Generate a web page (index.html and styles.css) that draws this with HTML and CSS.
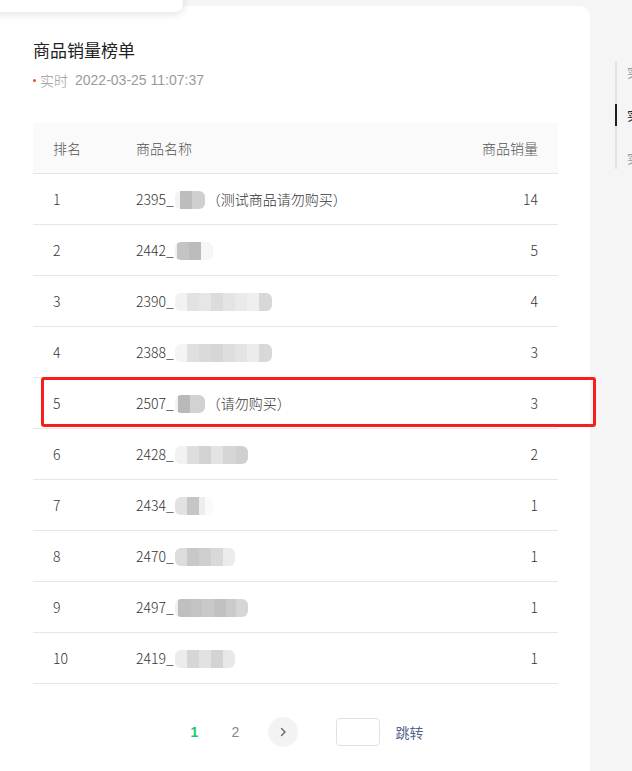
FILE: index.html
```html
<!DOCTYPE html>
<html lang="zh">
<head>
<meta charset="utf-8">
<title>商品销量榜单</title>
<link rel="stylesheet" href="styles.css">
</head>
<body>
<div class="popup"></div>
<div class="page">
  <section class="card">
    <h2 class="title">商品销量榜单</h2>
    <div class="meta"><span class="dot"></span><span class="live">实时</span><span class="time">2022-03-25 11:07:37</span></div>
    <div class="table-wrap">
      <table class="rank">
        <thead>
          <tr><th class="c-rank">排名</th><th class="c-name">商品名称</th><th class="c-sales">商品销量</th></tr>
        </thead>
        <tbody>
          <tr><td class="c-rank">1</td><td class="c-name">2395_<span class="mask m1"></span><span class="note">（测试商品请勿购买）</span></td><td class="c-sales">14</td></tr>
          <tr><td class="c-rank">2</td><td class="c-name">2442_<span class="mask m2"></span></td><td class="c-sales">5</td></tr>
          <tr><td class="c-rank">3</td><td class="c-name">2390_<span class="mask m3"></span></td><td class="c-sales">4</td></tr>
          <tr><td class="c-rank">4</td><td class="c-name">2388_<span class="mask m4"></span></td><td class="c-sales">3</td></tr>
          <tr><td class="c-rank">5</td><td class="c-name">2507_<span class="mask m5"></span><span class="note">（请勿购买）</span></td><td class="c-sales">3</td></tr>
          <tr><td class="c-rank">6</td><td class="c-name">2428_<span class="mask m6"></span></td><td class="c-sales">2</td></tr>
          <tr><td class="c-rank">7</td><td class="c-name">2434_<span class="mask m7"></span></td><td class="c-sales">1</td></tr>
          <tr><td class="c-rank">8</td><td class="c-name">2470_<span class="mask m8"></span></td><td class="c-sales">1</td></tr>
          <tr><td class="c-rank">9</td><td class="c-name">2497_<span class="mask m9"></span></td><td class="c-sales">1</td></tr>
          <tr><td class="c-rank">10</td><td class="c-name">2419_<span class="mask m10"></span></td><td class="c-sales">1</td></tr>
        </tbody>
      </table>
      <div class="highlight"></div>
    </div>
    <div class="pager">
      <span class="pg active">1</span>
      <span class="pg">2</span>
      <span class="pg next"><svg width="10" height="10" viewBox="0 0 10 10"><path d="M3.5 1.5 L7 5 L3.5 8.5" fill="none" stroke="#666" stroke-width="1.4" stroke-linecap="round" stroke-linejoin="round"/></svg></span>
      <span class="jump-input"></span>
      <span class="jump">跳转</span>
    </div>
  </section>
  <nav class="side">
    <ul class="side-list">
      <li class="side-item">实时概况</li>
      <li class="side-item active">实时榜单</li>
      <li class="side-item">实时访客</li>
    </ul>
  </nav>
</div>
</body>
</html>
```
FILE: styles.css
```css
html, body {
  margin: 0;
  padding: 0;
}
body {
  width: 632px;
  height: 771px;
  overflow: hidden;
  background: #f5f5f5;
  font-family: "Noto Sans CJK SC", "Noto Sans", sans-serif;
  color: #333;
  position: relative;
}
.popup {
  position: absolute;
  left: -12px;
  top: -12px;
  width: 195px;
  height: 24px;
  background: #fff;
  border-radius: 8px;
  box-shadow: 0 2px 8px rgba(0, 0, 0, 0.12);
  z-index: 2;
}
.page {
  display: flex;
  align-items: flex-start;
}
.card {
  width: 525px;
  min-height: 800px;
  margin-top: 6px;
  padding: 32px 32px 0 33px;
  background: #fff;
  border-radius: 0 11px 0 0;
  flex-shrink: 0;
}
.title {
  margin: 0;
  font-size: 17px;
  font-weight: 400;
  line-height: 24px;
  color: #222;
}
.meta {
  margin-top: 8px;
  height: 20px;
  display: flex;
  align-items: center;
  font-size: 14px;
  font-weight: 300;
  color: #999;
}
.dot {
  width: 3px;
  height: 3px;
  border-radius: 50%;
  background: #f04a3a;
  margin-right: 4px;
}
.live {
  margin-right: 7px;
}
.time {
  font-family: "Liberation Sans", Arial, sans-serif;
  font-weight: 400;
  font-size: 14px;
  color: #9a9a9a;
}
.table-wrap {
  position: relative;
  margin-top: 33px;
}
.rank {
  width: 100%;
  border-collapse: collapse;
  font-size: 14px;
  font-weight: 300;
}
.rank th, .rank td {
  height: 50px;
  padding: 0;
  border-bottom: 1px solid #e6e6e6;
  white-space: nowrap;
}
.rank th {
  background: #fafafa;
  font-weight: 300;
  color: #555;
  text-align: left;
}
.rank td {
  color: #333;
}
.c-rank {
  width: 83px;
  padding-left: 20px !important;
  text-align: left;
}
.rank .c-sales {
  text-align: right;
  padding-right: 20px !important;
}
.mask {
  display: inline-block;
  height: 18px;
  vertical-align: middle;
  margin-top: -2px;
  margin-left: 1px;
  border-radius: 6px;
  filter: blur(0.6px);
}
.note {
  margin-left: 2px;
}
.m1 { width: 30px; background: linear-gradient(90deg, #f3f3f3 0 5px, #bdbdbd 5px 17px, #cfcfcf 17px 30px); }
.m2 { width: 38px; background: linear-gradient(90deg, #f0f0f0 0 2px, #c4c4c4 2px 14px, #bcbcbc 14px 26px, #f6f6f6 26px 38px); }
.m3 { width: 97px; background: linear-gradient(90deg, #f2f2f2 0 12px, #e2e2e2 12px 24px, #e6e6e6 24px 36px, #dcdcdc 36px 48px, #e4e4e4 48px 60px, #eaeaea 60px 72px, #efefef 72px 84px, #d8d8d8 84px 97px); }
.m4 { width: 97px; background: linear-gradient(90deg, #f4f4f4 0 12px, #e0e0e0 12px 24px, #dadada 24px 36px, #d6d6d6 36px 48px, #dedede 48px 60px, #e4e4e4 60px 72px, #ececec 72px 84px, #d8d8d8 84px 97px); }
.m5 { width: 30px; background: linear-gradient(90deg, #f3f3f3 0 3px, #b9b9b9 3px 15px, #d2d2d2 15px 30px); }
.m6 { width: 73px; background: linear-gradient(90deg, #f2f2f2 0 12px, #dedede 12px 24px, #d3d3d3 24px 36px, #e3e3e3 36px 48px, #d6d6d6 48px 61px, #d0d0d0 61px 73px); }
.m7 { width: 38px; background: linear-gradient(90deg, #e2e2e2 0 12px, #c6c6c6 12px 24px, #ededed 24px 30px, #fafafa 30px 38px); }
.m8 { width: 60px; background: linear-gradient(90deg, #dcdcdc 0 12px, #c8c8c8 12px 24px, #cfcfcf 24px 36px, #d9d9d9 36px 48px, #ebebeb 48px 60px); }
.m9 { width: 73px; background: linear-gradient(90deg, #f0f0f0 0 3px, #bfbfbf 3px 15px, #c3c3c3 15px 27px, #c9c9c9 27px 39px, #c1c1c1 39px 51px, #cbcbcb 51px 61px, #d6d6d6 61px 73px); }
.m10 { width: 60px; background: linear-gradient(90deg, #ececec 0 12px, #d6d6d6 12px 24px, #e2e2e2 24px 36px, #d3d3d3 36px 48px, #e8e8e8 48px 60px); }
.highlight {
  position: absolute;
  left: 8px;
  top: 254px;
  width: 549px;
  height: 44px;
  border: 3px solid #f5201c;
  border-radius: 3px;
  pointer-events: none;
}
.pager {
  margin-top: 33px;
  height: 30px;
  display: flex;
  justify-content: center;
  align-items: center;
  padding-left: 12px;
  font-family: "Liberation Sans", Arial, sans-serif;
  font-size: 14px;
}
.pg {
  width: 30px;
  height: 30px;
  display: flex;
  align-items: center;
  justify-content: center;
  color: #888;
  border-radius: 50%;
}
.pg + .pg {
  margin-left: 11px;
}
.pg.active {
  color: #1fc86e;
  font-weight: 700;
}
.pg.next {
  margin-left: 17px;
  background: #f3f3f3;
}
.jump-input {
  width: 42px;
  height: 26px;
  margin-left: 38px;
  border: 1px solid #e0e0e0;
  border-radius: 4px;
  background: #fff;
}
.jump {
  margin-left: 16px;
  font-family: "Noto Sans CJK SC", sans-serif;
  font-size: 14px;
  color: #54658f;
}
.side {
  padding-left: 25px;
  padding-top: 61px;
  flex-shrink: 0;
}
.side-list {
  list-style: none;
  margin: 0;
  padding: 0;
  border-left: 2px solid #e3e3e3;
  display: flex;
  flex-direction: column;
  gap: 21px;
}
.side-item {
  height: 22px;
  line-height: 22px;
  padding-left: 10px;
  font-size: 13px;
  color: #999;
  white-space: nowrap;
  margin-left: -2px;
  border-left: 2px solid transparent;
}
.side-item.active {
  border-left-color: #1f1f1f;
  color: #222;
}
```
